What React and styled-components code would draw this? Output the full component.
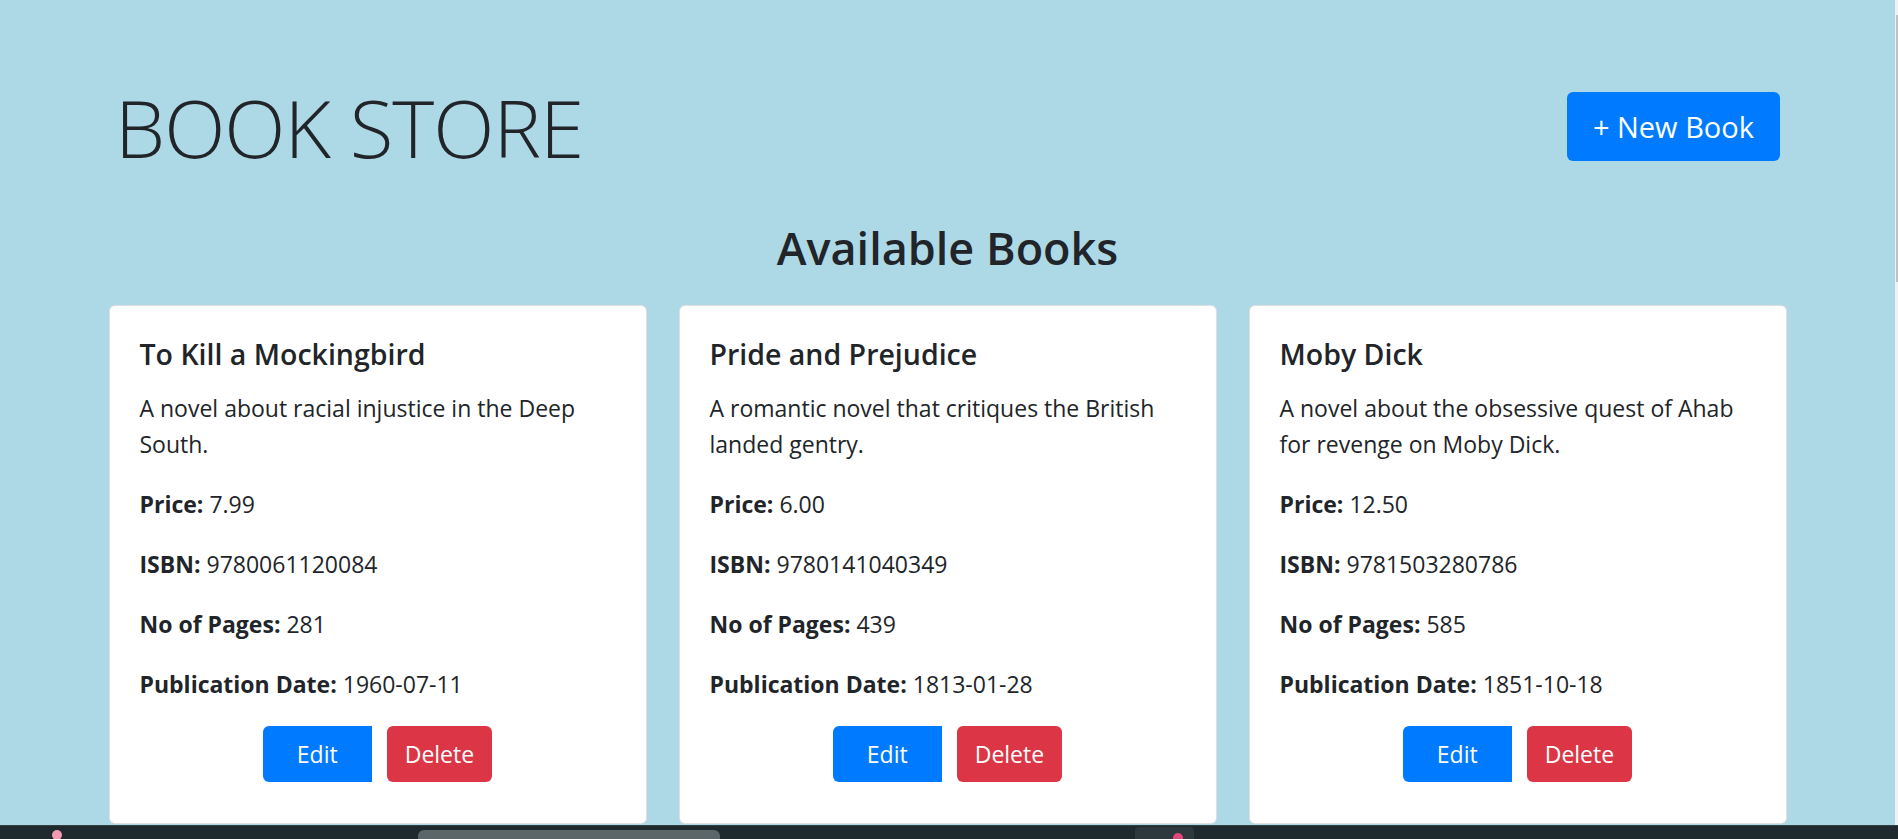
import React from "react";
import styled, { createGlobalStyle } from "styled-components";

const GlobalStyle = createGlobalStyle`
  html, body {
    margin: 0;
    padding: 0;
    background: #add8e6;
    color: #212529;
    font-family: "Open Sans", "Noto Sans", sans-serif;
    overflow: hidden;
  }
  * { box-sizing: border-box; }
`;

const Page = styled.div`
  width: calc(100% - 3px);
  min-height: 100vh;
  padding-top: 92px;
`;

const Header = styled.header`
  width: 1665px;
  margin: 0 auto;
  height: 69px;
  display: flex;
  align-items: center;
  justify-content: space-between;
`;

const Title = styled.h1`
  margin: 0;
  font-size: 80px;
  line-height: 80px;
  font-weight: 300;
  letter-spacing: -1px;
  color: #212529;
`;

const NewButton = styled.button`
  height: 69px;
  padding: 0 26px;
  border: none;
  border-radius: 6px;
  background: #007bff;
  color: #fff;
  font-family: inherit;
  font-size: 29px;
  font-weight: 400;
  cursor: pointer;
`;

const SectionTitle = styled.h2`
  margin: 59px 0 0;
  text-align: center;
  font-size: 45px;
  line-height: 56px;
  font-weight: 600;
  color: #212529;
`;

const Grid = styled.main`
  width: 1678px;
  margin: 29px auto 0;
  display: grid;
  grid-template-columns: repeat(3, 1fr);
  gap: 32px;
`;

const Card = styled.article`
  background: #fff;
  border: 1px solid rgba(0, 0, 0, 0.125);
  border-radius: 6px;
  padding: 30px 30px 41px;
`;

const CardTitle = styled.h5`
  margin: 0 0 18px;
  font-size: 28.5px;
  line-height: 36px;
  font-weight: 600;
  color: #212529;
`;

const Text = styled.p`
  margin: 0 0 24px;
  font-size: 23px;
  line-height: 36px;
  color: #212529;
`;

const Label = styled.strong`
  font-weight: 700;
`;

const Actions = styled.div`
  display: flex;
  justify-content: center;
  gap: 15px;
`;

const ActionButton = styled.button`
  height: 56px;
  padding: 0 ${(p) => (p.$wide ? "34px" : "18px")};
  border: none;
  border-radius: ${(p) => (p.$wide ? "6px 0 0 6px" : "6px")};
  background: ${(p) => (p.$danger ? "#dc3545" : "#007bff")};
  color: #fff;
  font-family: inherit;
  font-size: 23px;
  cursor: pointer;
`;

const Taskbar = styled.div`
  position: fixed;
  left: 0;
  right: 0;
  bottom: 0;
  height: 14px;
  background: #1f2a2f;
  border-top: 1px solid #34403f;
  display: flex;
  align-items: flex-start;
`;

const TaskDot = styled.span`
  width: 10px;
  height: 10px;
  margin-top: 4px;
  margin-left: ${(p) => p.$ml}px;
  border-radius: 50%;
  background: ${(p) => p.$color};
`;

const TaskPill = styled.span`
  width: 302px;
  height: 12px;
  margin-top: 4px;
  margin-left: ${(p) => p.$ml}px;
  border-radius: 6px 6px 0 0;
  background: #5a6668;
`;

const TaskSquare = styled.span`
  position: relative;
  width: 59px;
  height: 14px;
  margin-top: 1px;
  margin-left: ${(p) => p.$ml}px;
  border-radius: 4px 4px 0 0;
  background: #2e393e;
  &::after {
    content: "";
    position: absolute;
    left: 38px;
    top: 6px;
    width: 10px;
    height: 10px;
    border-radius: 50%;
    background: #e0457b;
  }
`;

const Scrollbar = styled.div`
  position: fixed;
  top: 0;
  right: 0;
  width: 3px;
  height: 100%;
  background: #f1f1f1;
  &::after {
    content: "";
    position: absolute;
    left: 1px;
    top: 15px;
    width: 2px;
    height: 267px;
    background: #c1c1c1;
  }
`;

const books = [
  {
    title: "To Kill a Mockingbird",
    description: "A novel about racial injustice in the Deep South.",
    price: "7.99",
    isbn: "9780061120084",
    pages: 281,
    date: "1960-07-11",
  },
  {
    title: "Pride and Prejudice",
    description: "A romantic novel that critiques the British landed gentry.",
    price: "6.00",
    isbn: "9780141040349",
    pages: 439,
    date: "1813-01-28",
  },
  {
    title: "Moby Dick",
    description: "A novel about the obsessive quest of Ahab for revenge on Moby Dick.",
    price: "12.50",
    isbn: "9781503280786",
    pages: 585,
    date: "1851-10-18",
  },
];

function BookCard({ book }) {
  return (
    <Card>
      <CardTitle>{book.title}</CardTitle>
      <Text>{book.description}</Text>
      <Text>
        <Label>Price:</Label> {book.price}
      </Text>
      <Text>
        <Label>ISBN:</Label> {book.isbn}
      </Text>
      <Text>
        <Label>No of Pages:</Label> {book.pages}
      </Text>
      <Text>
        <Label>Publication Date:</Label> {book.date}
      </Text>
      <Actions>
        <ActionButton $wide>Edit</ActionButton>
        <ActionButton $danger>Delete</ActionButton>
      </Actions>
    </Card>
  );
}

export default function App() {
  return (
    <>
      <GlobalStyle />
      <Page>
        <Header>
          <Title>BOOK STORE</Title>
          <NewButton>+ New Book</NewButton>
        </Header>
        <SectionTitle>Available Books</SectionTitle>
        <Grid>
          {books.map((b) => (
            <BookCard key={b.isbn} book={b} />
          ))}
        </Grid>
      </Page>
      <Scrollbar />
      <Taskbar>
        <TaskDot $ml={52} $color="#f29bb0" />
        <TaskPill $ml={356} />
        <TaskSquare $ml={415} />
      </Taskbar>
    </>
  );
}
